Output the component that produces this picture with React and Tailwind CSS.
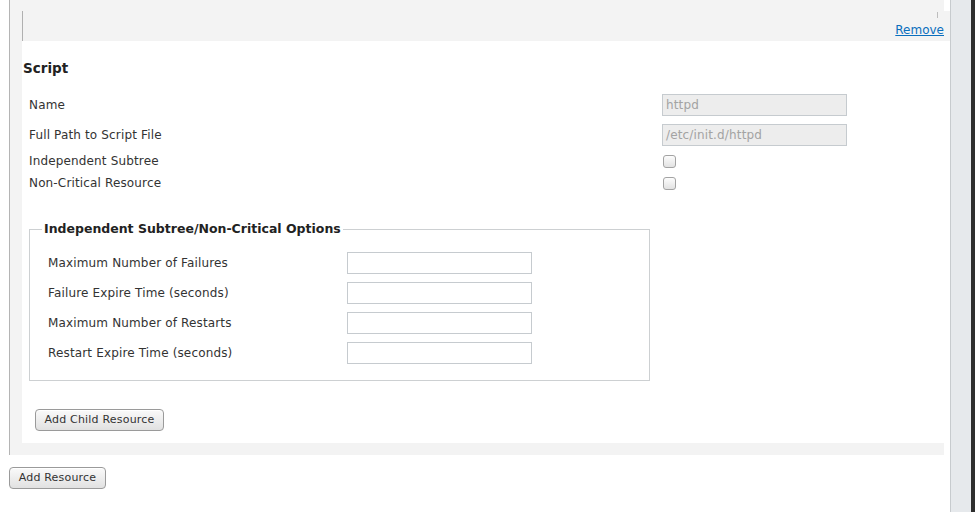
import React from "react";

const font = { fontFamily: '"DejaVu Sans", "Noto Sans", sans-serif' };

function Checkbox() {
  return (
    <span className="block h-[13px] w-[13px] rounded-[3px] border border-[#a3a3a3] bg-gradient-to-b from-[#fdfdfd] to-[#e2e2e2]" />
  );
}

function Btn({ children, className = "" }) {
  return (
    <button
      className={
        "h-[22px] rounded-[4px] border border-[#9a9a9a] bg-gradient-to-b from-[#fafafa] to-[#e1e1e1] text-[11px] leading-[20px] tracking-[0.2px] text-[#333] shadow-[inset_0_1px_0_#fff] " +
        className
      }
    >
      {children}
    </button>
  );
}

function DisabledInput({ value }) {
  return (
    <div className="h-[22px] w-[185px] border border-[#c6cbcf] bg-[#ededed] pl-[3px] text-[12px] leading-[20px] tracking-[0.15px] text-[#a3a3a3]">
      {value}
    </div>
  );
}

function TextInput() {
  return <div className="h-[22px] w-[185px] border border-[#c6cbcf] bg-white" />;
}

export default function App() {
  const opts = [
    "Maximum Number of Failures",
    "Failure Expire Time (seconds)",
    "Maximum Number of Restarts",
    "Restart Expire Time (seconds)",
  ];
  return (
    <div className="flex h-[512px] w-[975px] overflow-hidden bg-white text-[#333]" style={font}>
      <div className="w-[950px] shrink-0">
        <div className="ml-[9px] w-[935px] border-l border-[#b4b4b4] bg-[#f3f3f3] pl-[12px] pt-[11px] pb-[12px]">
          <div className="w-[928px]">
            <div className="relative flex h-[30px] items-end justify-end border-l border-[#b0b0b0] bg-[#f3f3f3] pr-[6px] pb-[4px]">
              <span className="absolute right-[12px] top-[1px] h-[6px] w-px bg-[#bdbdbd]" />
              <a href="#" className="text-[12px] leading-[14px] text-[#0a6ebd] underline">
                Remove
              </a>
            </div>
            <div className="bg-white pt-[19px] pb-[12px]">
              <h3 className="ml-px text-[13.5px] font-bold leading-[16px] text-[#222]">Script</h3>
              <div className="ml-[7px] mt-[14px] grid grid-cols-[633px_1fr] text-[12px] tracking-[0.15px]">
                <div className="flex h-[30px] items-center">Name</div>
                <div className="flex h-[30px] items-center">
                  <DisabledInput value="httpd" />
                </div>
                <div className="flex h-[30px] items-center">Full Path to Script File</div>
                <div className="flex h-[30px] items-center">
                  <DisabledInput value="/etc/init.d/httpd" />
                </div>
                <div className="flex h-[22px] items-center">Independent Subtree</div>
                <div className="flex h-[22px] items-center pl-[1px]">
                  <Checkbox />
                </div>
                <div className="flex h-[22px] items-center">Non-Critical Resource</div>
                <div className="flex h-[22px] items-center pl-[1px]">
                  <Checkbox />
                </div>
              </div>
              <fieldset className="ml-[7px] mt-[27px] w-[621px] border border-[#cdd0d2] p-0">
                <legend className="ml-[12px] px-[2px] text-[12.5px] font-bold leading-[16px] text-[#222]">
                  Independent Subtree/Non-Critical Options
                </legend>
                <div className="grid grid-cols-[299px_1fr] px-[18px] pt-[11px] pb-[12px] text-[12px] tracking-[0.15px]">
                  {opts.map((o) => (
                    <React.Fragment key={o}>
                      <div className="flex h-[30px] items-center">{o}</div>
                      <div className="flex h-[30px] items-center">
                        <TextInput />
                      </div>
                    </React.Fragment>
                  ))}
                </div>
              </fieldset>
              <Btn className="ml-[13px] mt-[28px] w-[129px]">Add Child Resource</Btn>
            </div>
          </div>
        </div>
        <Btn className="ml-[9px] mt-[12px] w-[97px]">Add Resource</Btn>
      </div>
      <div className="w-[21px] shrink-0 border-l border-[#c7cbce] bg-[#e6e9ec]" />
      <div className="w-[4px] shrink-0 bg-[#2e2e2e]" />
    </div>
  );
}
